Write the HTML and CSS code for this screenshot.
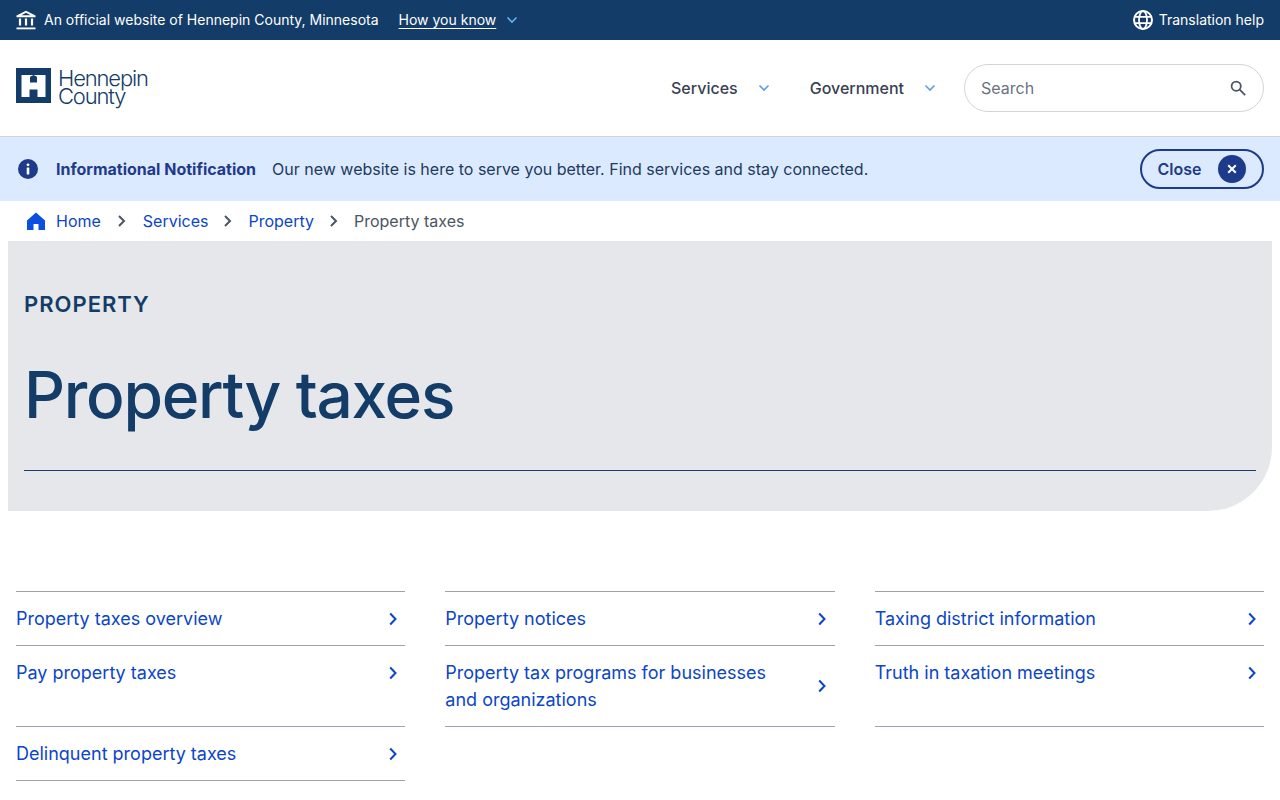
FILE: index.html
```html
<!DOCTYPE html>
<html lang="en">
<head>
<meta charset="utf-8">
<title>Property taxes - Hennepin County</title>
<link rel="stylesheet" href="styles.css">
</head>
<body>
<div class="gov-bar">
  <div class="gov-left">
    <svg class="gov-icon" width="20" height="20" viewBox="0 0 20 20" fill="none"><path d="M10 .8 19.5 5.4V7.2H.5V5.4Z" fill="#fff"/><path d="M10 2.8 14.6 5.2H5.4Z" fill="#133d68"/><path d="M4 8.5v7M10 8.5v7M16 8.5v7" stroke="#fff" stroke-width="2.2"/><path d="M.5 18.4h19" stroke="#fff" stroke-width="1.8"/></svg>
    <span class="gov-text">An official website of Hennepin County, Minnesota</span>
    <a class="gov-link" href="#">How you know</a>
    <svg class="chev-sm gov-chev" width="12" height="8" viewBox="0 0 12 8" fill="none"><path d="M1.5 1.5 6 6l4.5-4.5" stroke="#5bb2ee" stroke-width="1.6"/></svg>
  </div>
  <a class="gov-right" href="#">
    <svg width="20" height="20" viewBox="0 0 20 20" fill="none" stroke="#fff" stroke-width="2"><circle cx="10" cy="10" r="9"/><ellipse cx="10" cy="10" rx="4" ry="9" stroke-width="1.8"/><path d="M1.5 6.8h17M1.5 13.2h17" stroke-width="1.8"/></svg>
    <span>Translation help</span>
  </a>
</div>

<header class="site-header">
  <a class="logo" href="#">
    <svg width="35" height="35" viewBox="0 0 35 35"><rect width="35" height="35" fill="#133d68"/><path d="M5.5 7H29.5V29H21.5V21.5H13.5V29H5.5Z" fill="#fff"/><path d="M14 14.5V9.5Q14 8.6 15 8.2L17.5 7L20 8.2Q21 8.6 21 9.5V14.5Z" fill="#133d68"/></svg>
    <span class="logo-text">Hennepin<br>County</span>
  </a>
  <nav class="main-nav">
    <a class="nav-item nav-services" href="#">Services
      <svg width="12" height="8" viewBox="0 0 12 8" fill="none"><path d="M1.5 1.5 6 6l4.5-4.5" stroke="#5b9fe0" stroke-width="1.6"/></svg></a>
    <a class="nav-item" href="#">Government
      <svg width="12" height="8" viewBox="0 0 12 8" fill="none"><path d="M1.5 1.5 6 6l4.5-4.5" stroke="#5b9fe0" stroke-width="1.6"/></svg></a>
  </nav>
  <div class="search">
    <span class="search-text">Search</span>
    <svg width="16" height="16" viewBox="0 0 16 16" fill="none" stroke="#4b5563" stroke-width="1.8"><circle cx="6.2" cy="6.2" r="4.6"/><path d="m9.7 9.7 5.5 5.5"/></svg>
  </div>
</header>

<section class="notice">
  <svg class="notice-icon" width="20" height="20" viewBox="0 0 20 20"><circle cx="10" cy="10" r="10" fill="#1e3a8a"/><circle cx="10" cy="5.8" r="1.4" fill="#fff"/><rect x="8.7" y="8.4" width="2.6" height="7" rx=".6" fill="#fff"/></svg>
  <strong class="notice-title">Informational Notification</strong>
  <span class="notice-text">Our new website is here to serve you better. Find services and stay connected.</span>
  <button class="close-btn">Close
    <span class="close-x"><svg width="10" height="10" viewBox="0 0 10 10" fill="none"><path d="M1.2 1.2l7.6 7.6M8.8 1.2 1.2 8.8" stroke="#fff" stroke-width="2"/></svg></span>
  </button>
</section>

<nav class="crumbs">
  <svg class="home" width="20" height="20" viewBox="0 0 20 20"><path d="M10 1.5 19 9.6V19H12.5V13H7.5V19H1V9.6Z" fill="#0a4fe0"/></svg>
  <a href="#">Home</a>
  <svg class="sep sep-first" width="10" height="12" viewBox="0 0 10 12" fill="none"><path d="M2 1l5 5-5 5" stroke="#4b5563" stroke-width="2"/></svg>
  <a href="#">Services</a>
  <svg class="sep" width="10" height="12" viewBox="0 0 10 12" fill="none"><path d="M2 1l5 5-5 5" stroke="#4b5563" stroke-width="2"/></svg>
  <a href="#">Property</a>
  <svg class="sep" width="10" height="12" viewBox="0 0 10 12" fill="none"><path d="M2 1l5 5-5 5" stroke="#4b5563" stroke-width="2"/></svg>
  <span class="crumb-current">Property taxes</span>
</nav>

<section class="hero">
  <p class="eyebrow">PROPERTY</p>
  <h1>Property taxes</h1>
  <div class="hero-rule"></div>
</section>

<ul class="links">
  <li class="first"><a href="#"><span>Property taxes overview</span><svg width="8" height="14" viewBox="0 0 8 14" fill="none"><path d="M1.2 1.5 6.5 7l-5.3 5.5" stroke="#0b45c9" stroke-width="2"/></svg></a></li>
  <li class="first"><a href="#"><span>Property notices</span><svg width="8" height="14" viewBox="0 0 8 14" fill="none"><path d="M1.2 1.5 6.5 7l-5.3 5.5" stroke="#0b45c9" stroke-width="2"/></svg></a></li>
  <li class="first"><a href="#"><span>Taxing district information</span><svg width="8" height="14" viewBox="0 0 8 14" fill="none"><path d="M1.2 1.5 6.5 7l-5.3 5.5" stroke="#0b45c9" stroke-width="2"/></svg></a></li>
  <li class="top"><a href="#"><span>Pay property taxes</span><svg width="8" height="14" viewBox="0 0 8 14" fill="none"><path d="M1.2 1.5 6.5 7l-5.3 5.5" stroke="#0b45c9" stroke-width="2"/></svg></a></li>
  <li><a href="#"><span>Property tax programs for businesses and organizations</span><svg width="8" height="14" viewBox="0 0 8 14" fill="none"><path d="M1.2 1.5 6.5 7l-5.3 5.5" stroke="#0b45c9" stroke-width="2"/></svg></a></li>
  <li class="top"><a href="#"><span>Truth in taxation meetings</span><svg width="8" height="14" viewBox="0 0 8 14" fill="none"><path d="M1.2 1.5 6.5 7l-5.3 5.5" stroke="#0b45c9" stroke-width="2"/></svg></a></li>
  <li><a href="#"><span>Delinquent property taxes</span><svg width="8" height="14" viewBox="0 0 8 14" fill="none"><path d="M1.2 1.5 6.5 7l-5.3 5.5" stroke="#0b45c9" stroke-width="2"/></svg></a></li>
</ul>
</body>
</html>
```
FILE: styles.css
```css
* { box-sizing: border-box; }
html, body { margin: 0; padding: 0; }
body { font-family: Inter, "Liberation Sans", sans-serif; color: #374151; background: #fff; overflow: hidden; height: 800px; }
a { text-decoration: none; color: inherit; }

.gov-bar { height: 40px; background: #133d68; color: #fff; display: flex; align-items: center; justify-content: space-between; padding: 0 16px; font-size: 14px; }
.gov-left { display: flex; align-items: center; }
.gov-icon { margin-right: 8px; }
.gov-text { margin-right: 20px; padding-bottom: 2px; }
.gov-link { text-decoration: underline; text-underline-offset: 3px; margin-right: 10px; padding-bottom: 2px; }
.gov-right { display: flex; align-items: center; gap: 6px; }
.gov-right span { padding-bottom: 2px; }

.site-header { height: 97px; border-bottom: 1px solid #d1d5db; display: flex; align-items: center; padding: 0 16px; }
.logo { display: flex; align-items: center; gap: 7px; color: #133d68; margin: 0 auto 6px 0; }
.logo-text { font-size: 22px; line-height: 18px; font-weight: 300; letter-spacing: -1.15px; padding-top: 3px; }
.main-nav { display: flex; align-items: center; font-size: 16px; font-weight: 500; color: #374151; margin-right: 28px; }
.nav-item { display: flex; align-items: center; gap: 20px; }
.nav-services { margin-right: 40px; }
.search { width: 300px; height: 48px; border: 1px solid #d1d5db; border-radius: 24px; display: flex; align-items: center; justify-content: space-between; padding: 0 17px 0 16px; font-size: 16px; color: #6b7280; }

.notice { height: 64px; background: #dbeafe; display: flex; align-items: center; padding: 0 16px 0 18px; font-size: 16px; color: #1e3a5f; }
.notice-icon { margin-right: 18px; }
.notice-title { color: #1e3a8a; font-weight: 700; margin-right: 16px; }
.notice-text { margin-right: auto; }
.close-btn { width: 124px; height: 40px; border: 2px solid #1e3a8a; border-radius: 20px; background: transparent; color: #1e3a8a; font: 600 16px Inter, "Liberation Sans", sans-serif; display: flex; align-items: center; justify-content: space-between; padding: 0 16px 0 15.5px; }
.close-x { width: 28px; height: 28px; border-radius: 50%; background: #1e3a8a; display: flex; align-items: center; justify-content: center; }

.crumbs { height: 40px; display: flex; align-items: center; padding-left: 26px; font-size: 16px; color: #0b45c9; }
.crumbs .home { margin-right: 10px; }
.sep { margin: 0 15px; }
.sep-first { margin: 0 16px; }
.crumb-current { color: #4b5563; }

.hero { margin: 0 8px; height: 270px; background: #e5e7eb; border-bottom-right-radius: 64px; padding: 16px 16px 0; display: flow-root; }
.eyebrow { margin: 34px 0 0; font-size: 22px; line-height: 26px; font-weight: 600; color: #133d68; letter-spacing: 1px; }
h1 { margin: 38px 0 0; font-size: 64px; line-height: 80px; font-weight: 500; letter-spacing: -1.28px; color: #133d68; }
.hero-rule { margin-top: 35px; height: 1px; background: #1e3a6e; }

.links { list-style: none; margin: 80px 16px 0; padding: 0; display: grid; grid-template-columns: repeat(3, 1fr); column-gap: 40px; font-size: 18px; line-height: 27px; color: #0b45c9; }
.links li { border-bottom: 1px solid #9ca3af; }
.links li.first { border-top: 1px solid #9ca3af; }
.links a { display: flex; align-items: center; justify-content: space-between; padding: 13px 8.5px 13px 0; height: 100%; }
.links li.top a { align-items: flex-start; }
.links li.top svg { margin-top: 7px; }
.links span { max-width: 340px; }
```
